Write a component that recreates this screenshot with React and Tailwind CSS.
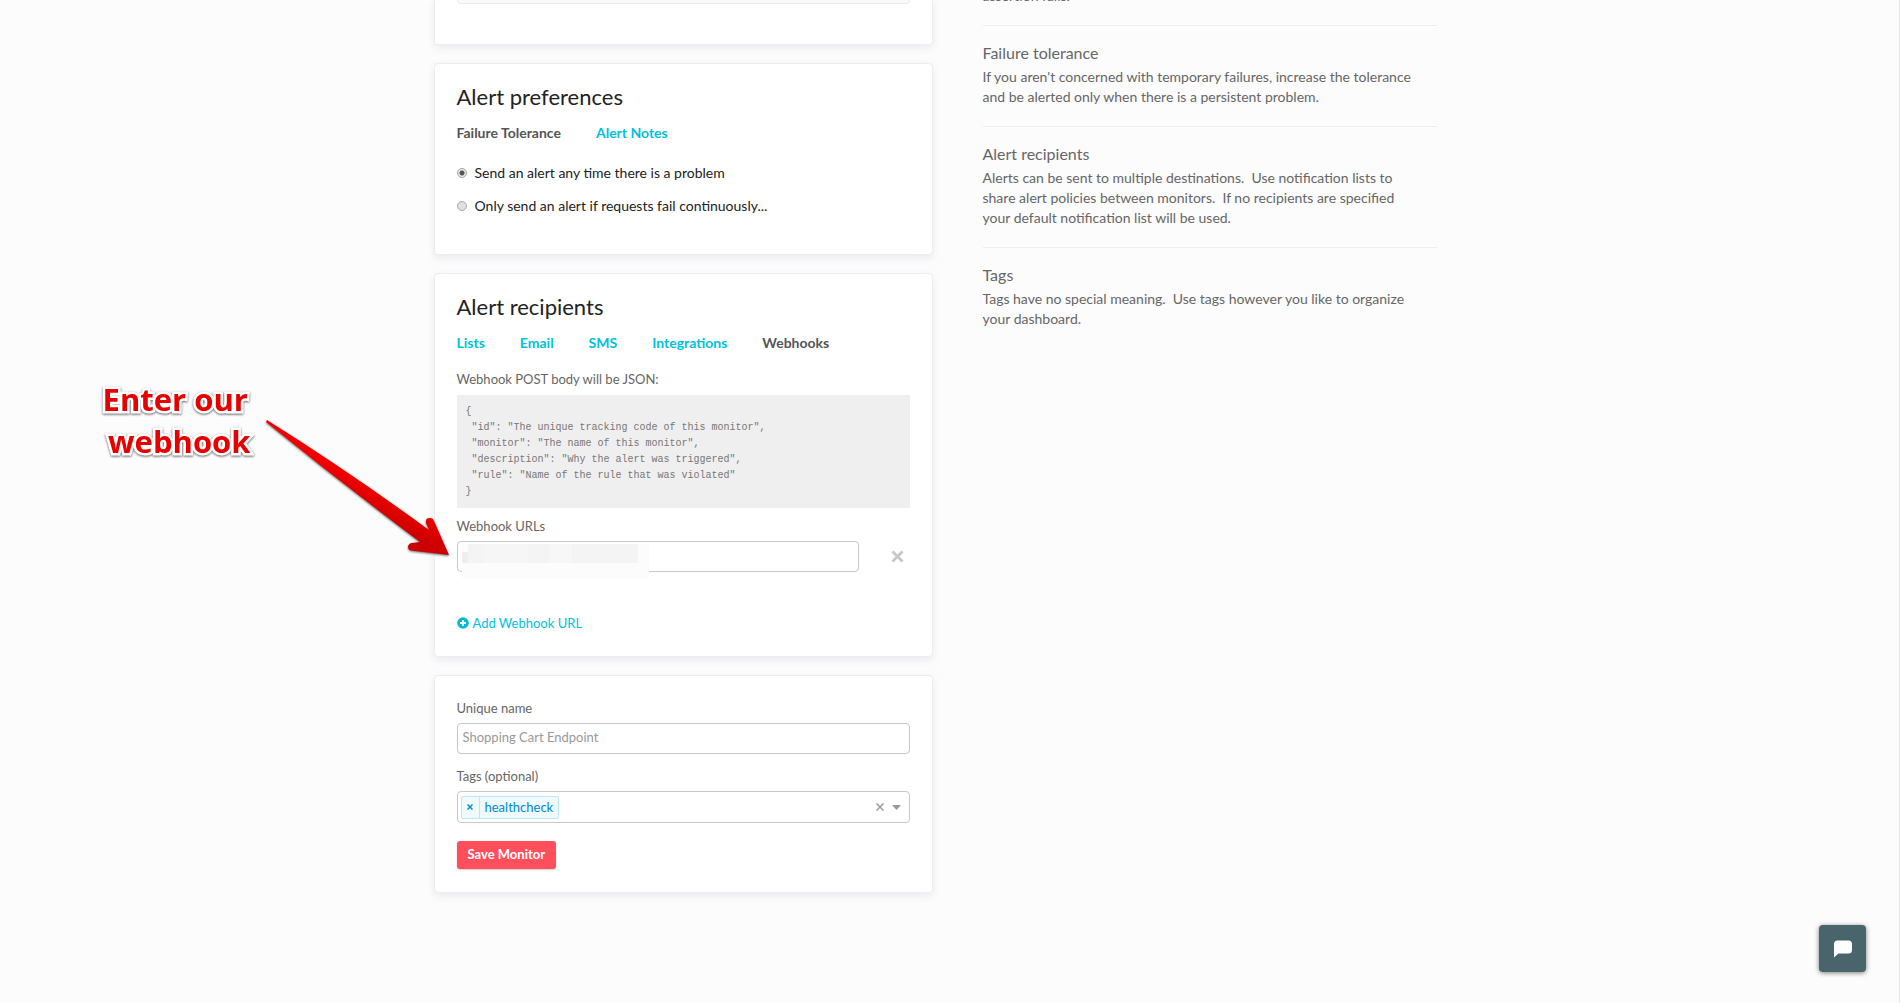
import React, { useState } from 'react';

const HELP_SECTIONS = [
  {
    title: 'Failure tolerance',
    text: "If you aren't concerned with temporary failures, increase the tolerance and be alerted only when there is a persistent problem.",
  },
  {
    title: 'Alert recipients',
    text: 'Alerts can be sent to multiple destinations. \u00a0Use notification lists to share alert policies between monitors. \u00a0If no recipients are specified your default notification list will be used.',
  },
  {
    title: 'Tags',
    text: 'Tags have no special meaning. \u00a0Use tags however you like to organize your dashboard.',
  },
];

const WEBHOOK_BODY = `{
 "id": "The unique tracking code of this monitor",
 "monitor": "The name of this monitor",
 "description": "Why the alert was triggered",
 "rule": "Name of the rule that was violated"
}`;

const Card = ({ children, className = '' }) => (
  <section
    className={`rounded border border-[#ecedf0] bg-white px-[22px] shadow-[0_3px_8px_rgba(60,60,110,0.09)] ${className}`}
  >
    {children}
  </section>
);

const Tabs = ({ items, active, onSelect }) => (
  <nav className="mt-3 flex gap-[35px]">
    {items.map((item) => (
      <button
        key={item}
        type="button"
        onClick={() => onSelect(item)}
        className={`text-[14px] leading-5 font-bold ${item === active ? 'text-[#555]' : 'text-[#00c1da]'}`}
      >
        {item}
      </button>
    ))}
  </nav>
);

const Radio = ({ id, checked, onChange, label }) => (
  <label htmlFor={id} className="flex items-center gap-2 text-[14px] leading-5 text-[#222]">
    <input
      id={id}
      type="radio"
      name="tolerance"
      checked={checked}
      onChange={onChange}
      className="size-[10px] appearance-none rounded-full border border-[#a8a8a8] bg-[#e0e0e0] checked:bg-[radial-gradient(circle,#555_0_2px,#e6e6e6_3px)]"
    />
    {label}
  </label>
);

const PreferencesCard = () => {
  const [tab, setTab] = useState('Failure Tolerance');
  const [mode, setMode] = useState('any');

  return (
    <Card className="mt-[18px] pt-[19px] pb-[38px]">
      <h2 className="text-[22px] leading-7 text-[#222]">Alert preferences</h2>
      <Tabs items={['Failure Tolerance', 'Alert Notes']} active={tab} onSelect={setTab} />
      <div className="mt-5 flex flex-col gap-[13px]">
        <Radio
          id="any"
          checked={mode === 'any'}
          onChange={() => setMode('any')}
          label="Send an alert any time there is a problem"
        />
        <Radio
          id="continuous"
          checked={mode === 'continuous'}
          onChange={() => setMode('continuous')}
          label="Only send an alert if requests fail continuously..."
        />
      </div>
    </Card>
  );
};

const RecipientsCard = () => {
  const [tab, setTab] = useState('Webhooks');

  return (
    <Card className="mt-[18px] pt-[19px] pb-[23px]">
      <h2 className="text-[22px] leading-7 text-[#222]">Alert recipients</h2>
      <Tabs
        items={['Lists', 'Email', 'SMS', 'Integrations', 'Webhooks']}
        active={tab}
        onSelect={setTab}
      />
      <p className="mt-4 text-[13px] leading-5 text-[#666]">Webhook POST body will be JSON:</p>
      <pre className="mt-[6px] bg-[#efefef] px-[9px] pt-[9px] pb-2 font-['Liberation_Mono',monospace] text-[10px] leading-4 text-[#777]">
        {WEBHOOK_BODY}
      </pre>
      <label htmlFor="webhook" className="mt-2 block text-[13px] leading-5 text-[#666]">
        Webhook URLs
      </label>
      <div className="mt-[5px] flex items-center">
        <div className="relative flex-1">
          <input
            id="webhook"
            type="text"
            className="block h-[31px] w-full rounded border border-[#c8c8c8] bg-white px-[5px] text-[13px]"
          />
          {/* redacted address */}
          <div className="absolute top-[3px] left-[5px] h-[35px] w-[187px] bg-[#fcfcfc]">
            <div className="flex h-[19px] w-[176px]">
              <span className="mt-2 w-[6px] bg-[#eeeeee]" />
              <span className="w-4 bg-[#f4f4f4]" />
              <span className="w-11 bg-[#f6f6f6]" />
              <span className="w-[22px] bg-[#f4f4f4]" />
              <span className="w-[22px] bg-[#f7f7f7]" />
              <span className="flex-1 bg-[#f4f4f4]" />
            </div>
          </div>
        </div>
        <button type="button" aria-label="Remove webhook" className="mr-[6px] ml-8">
          <svg className="size-[13px]" viewBox="0 0 13 13" fill="none" stroke="#c6c6c6" strokeWidth="2.8">
            <path d="M1.5 1.5 L11.5 11.5 M11.5 1.5 L1.5 11.5" />
          </svg>
        </button>
      </div>
      <button
        type="button"
        className="mt-[41px] flex items-center gap-1 text-[13px] leading-5 text-[#00c1da]"
      >
        <svg className="size-3" viewBox="0 0 12 12">
          <circle cx="6" cy="6" r="5.8" fill="#00b9d6" />
          <path d="M6 3v6M3 6h6" stroke="#fff" strokeWidth="1.9" />
        </svg>
        Add Webhook URL
      </button>
    </Card>
  );
};

const DetailsCard = () => (
  <Card className="mt-[18px] pt-[22px] pb-[23px]">
    <label htmlFor="name" className="block text-[13px] leading-5 text-[#666]">
      Unique name
    </label>
    <input
      id="name"
      type="text"
      placeholder="Shopping Cart Endpoint"
      className="mt-[5px] block h-[31px] w-full rounded border border-[#c8c8c8] bg-white px-[5px] pb-1 text-[13px] placeholder:text-[#999]"
    />
    <label htmlFor="tags" className="mt-3 block text-[13px] leading-5 text-[#666]">
      Tags (optional)
    </label>
    <div className="mt-[5px] flex h-8 items-center rounded border border-[#c8c8c8] bg-white pr-2 pl-[3px]">
      <span className="flex h-[23px] items-stretch rounded-[2px] border border-[#bfe7f1] bg-[#f0f9fc] text-[13px] leading-5 text-[#08c]">
        <button type="button" aria-label="Remove healthcheck" className="flex w-[18px] items-center justify-center border-r border-[#bfe7f1]">
          <svg className="size-[6px]" viewBox="0 0 6 6" stroke="#0090d0" strokeWidth="1.5">
            <path d="M.5.5l5 5M5.5.5l-5 5" />
          </svg>
        </button>
        <span className="px-[5px]">healthcheck</span>
      </span>
      <input id="tags" type="text" className="h-6 min-w-0 flex-1 bg-transparent px-1 outline-none" />
      <button type="button" aria-label="Clear tags">
        <svg className="size-2" viewBox="0 0 8 8" stroke="#999" strokeWidth="1.5">
          <path d="M.5.5l7 7M7.5.5l-7 7" />
        </svg>
      </button>
      <button type="button" aria-label="Open tags" className="ml-2">
        <svg className="h-[5px] w-[9px]" viewBox="0 0 9 5" fill="#999">
          <path d="M0 0h9L4.500 5z" />
        </svg>
      </button>
    </div>
    <button
      type="button"
      className="mt-[18px] block h-7 rounded-[3px] bg-[#ff4f5c] px-[11px] text-[13px] font-bold text-white shadow-[0_1px_2px_rgba(0,0,0,0.2)]"
    >
      Save Monitor
    </button>
  </Card>
);

const HelpColumn = () => (
  <aside className="-mt-[14px] w-[454px] shrink text-[14px] leading-5 text-[#666]">
    <p>assertion fails.</p>
    {HELP_SECTIONS.map((section) => (
      <div key={section.title} className="mt-[19px] border-t border-[#ededed] pt-[15px]">
        <h3 className="mb-[2px] text-[16px] leading-6">{section.title}</h3>
        <p className="pr-4">{section.text}</p>
      </div>
    ))}
  </aside>
);

const Annotation = () => (
  <div className="pointer-events-none absolute inset-0">
    <svg className="absolute inset-0 h-full w-full">
      <defs>
        <linearGradient id="arrow" x1="0.6" y1="0.5" x2="0.5" y2="0.65">
          <stop offset="0" stopColor="#f20000" />
          <stop offset="1" stopColor="#cc0000" />
        </linearGradient>
      </defs>
      <path
        d="M267 420 Q350 472 429 530 L426 523 Q425 518 430 518 Q433 518 434 521 L449 555 L411 550.500 Q408 550 408 546.500 Q409 543 412 543 L420 542 Q340 482 266 422 Z"
        fill="url(#arrow)"
        className="drop-shadow-[0_1px_1px_rgba(0,0,0,0.6)]"
      />
    </svg>
    <p className="absolute top-[378px] left-[100px] text-center font-['Open_Sans',sans-serif] text-[31px] leading-[42px] font-bold whitespace-pre text-[#e60000] [paint-order:stroke_fill] [-webkit-text-stroke:5px_white] drop-shadow-[0_1px_1px_rgba(0,0,0,0.6)]">
      {'Enter our\n webhook'}
    </p>
  </div>
);

export default function App() {
  return (
    <div className="relative min-h-screen overflow-hidden border-r border-[#e8e8e8] bg-[#fcfcfc] font-['Lato',sans-serif]">
      <div className="mx-auto flex max-w-[1032px] items-start gap-[50px]">
        <main className="w-[499px] shrink-0 pb-[108px]">
          <Card className="rounded-t-none border-t-0 pb-10">
            <div className="h-1 rounded-b border border-t-0 border-[#ececec] bg-[#fafafa]" />
          </Card>
          <PreferencesCard />
          <RecipientsCard />
          <DetailsCard />
        </main>
        <HelpColumn />
      </div>
      <Annotation />
      <button
        type="button"
        aria-label="Open chat"
        className="fixed right-[34px] bottom-[31px] flex size-[47px] items-center justify-center rounded bg-[#4a646b] shadow-[0_1px_5px_rgba(0,0,0,0.5)]"
      >
        <svg className="size-[18px]" viewBox="0 0 18 18" fill="#fff">
          <path d="M3.500.5h11Q18 .5 18 4v6q0 3.500-3.500 3.500H4.500L0 17.500V4Q0 .5 3.500.5z" />
        </svg>
      </button>
    </div>
  );
}
